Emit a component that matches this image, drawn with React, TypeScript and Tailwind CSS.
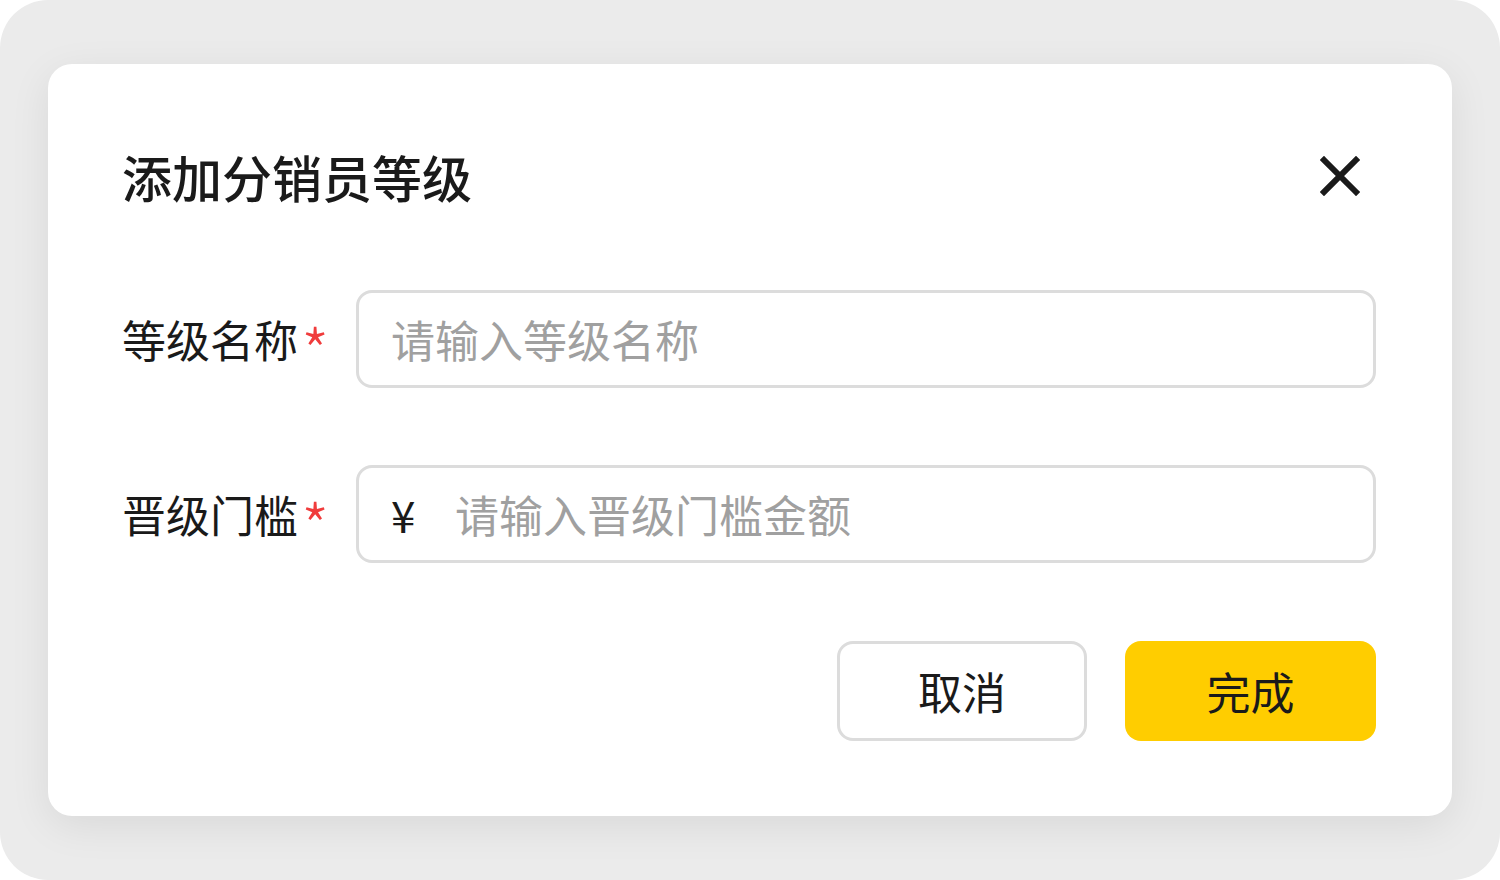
import React from 'react';

const font = { fontFamily: '"Noto Sans CJK SC", "Noto Sans", sans-serif' };

type FieldProps = {
  label: string;
  placeholder: string;
  prefix?: string;
};

const Field: React.FC<FieldProps> = ({ label, placeholder, prefix }) => (
  <div className="flex items-center">
    <div className="w-[234px] flex-shrink-0 flex items-center text-[44px] leading-none text-[#1a1a1a]">
      <span>{label}</span>
      <span className="ml-[3px] text-[#f03c3c] text-[64px] font-light leading-none translate-y-[10px]">*</span>
    </div>
    <div className="flex-1 h-[98px] flex items-center rounded-[16px] border-[3px] border-[#dcdcdc] pl-[32px] text-[44px] leading-none">
      {prefix && <span className="w-[64px] text-[#1a1a1a]">{prefix}</span>}
      <span className="text-[#a0a0a0]">{placeholder}</span>
    </div>
  </div>
);

export default function App() {
  return (
    <div className="w-[1500px] h-[880px] bg-white" style={font}>
      <div className="w-full h-full rounded-[48px] bg-[#ebebeb] px-[48px] pt-[64px]">
        <div className="h-[752px] rounded-[24px] bg-white shadow-[0_10px_40px_rgba(0,0,0,0.08)] pl-[74px] pr-[76px] pt-[82px]">
          {/* header */}
          <div className="h-[60px] flex items-center justify-between">
            <h1 className="text-[50px] leading-none font-medium text-[#1a1a1a]">添加分销员等级</h1>
            <svg width="40" height="40" viewBox="0 0 40 40" className="mr-[16px]">
              <path d="M4 4 L36 36 M36 4 L4 36" stroke="#1a1a1a" strokeWidth="6" strokeLinecap="square" />
            </svg>
          </div>

          <div className="mt-[84px] flex flex-col gap-[77px]">
            <Field label="等级名称" placeholder="请输入等级名称" />
            <Field label="晋级门槛" placeholder="请输入晋级门槛金额" prefix="¥" />
          </div>

          {/* actions */}
          <div className="mt-[78px] flex justify-end gap-[38px]">
            <button className="w-[250px] h-[100px] rounded-[16px] border-[3px] border-[#dcdcdc] bg-white text-[44px] leading-none text-[#1a1a1a]">
              取消
            </button>
            <button className="w-[251px] h-[100px] rounded-[16px] bg-[#ffcd00] text-[44px] leading-none text-[#1a1a1a]">
              完成
            </button>
          </div>
        </div>
      </div>
    </div>
  );
}
